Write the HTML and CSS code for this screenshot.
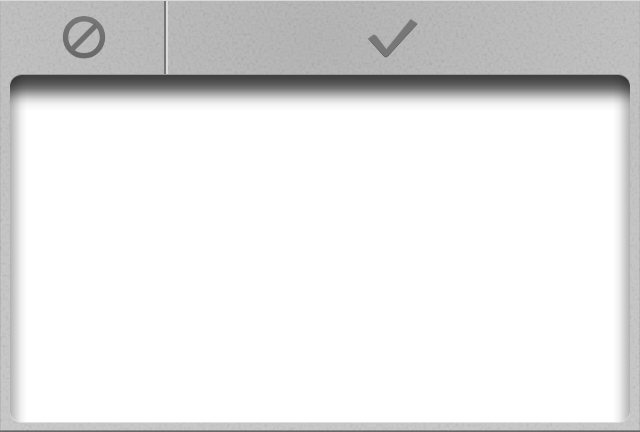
FILE: index.html
```
<!DOCTYPE html>
<html lang="en">
<head>
<meta charset="utf-8">
<title>Panel</title>
<link rel="stylesheet" href="styles.css">
</head>
<body>
<div class="frame">
  <svg class="grain" aria-hidden="true">
    <filter id="grain" x="0" y="0" width="100%" height="100%" color-interpolation-filters="sRGB">
      <feTurbulence type="fractalNoise" baseFrequency="0.34" numOctaves="2" seed="8"/>
      <feColorMatrix values="0.33 0.33 0.33 0 0  0.33 0.33 0.33 0 0  0.33 0.33 0.33 0 0  0 0 0 0 0.12"/>
    </filter>
    <rect width="100%" height="100%" filter="url(#grain)"/>
  </svg>
  <header class="toolbar">
    <button class="action cancel" aria-label="Cancel">
      <svg class="icon" width="44" height="44" viewBox="0 0 44 44">
        <defs>
          <linearGradient id="ink" x1="0" y1="0" x2="0" y2="1"><stop offset="0" stop-color="#777"/><stop offset="1" stop-color="#696969"/></linearGradient>
        </defs>
        <circle cx="22" cy="22.3" r="18.5" fill="none" stroke="url(#ink)" stroke-width="5.4"/>
        <path d="M9.5 34.8 34.5 9.8" stroke="#707070" stroke-width="5.2"/>
      </svg>
    </button>
    <button class="action confirm" aria-label="Confirm">
      <svg class="icon" width="52" height="44" viewBox="0 0 52 44">
        <path d="M1.2 23.6 6.7 19.8 9.5 21 19.4 34.3 43.8 4.3 50.3 8.8 20.8 41.2Q19 43 17 41.2Z" fill="#777"/>
        <path d="M1.2 23.6 17 41.2Q19 43 20.8 41.2L50.3 8.8" fill="none" stroke="#676767" stroke-width="1"/>
        <path d="M2 23.1 6.7 19.8 9.5 21M19.4 34.3 43.8 4.3 49.5 8.2" fill="none" stroke="#858585" stroke-width=".8"/>
      </svg>
    </button>
  </header>
  <main class="well"></main>
</div>
</body>
</html>
```
FILE: styles.css
```
* { box-sizing: border-box; }
body { margin: 0; }
.frame {
  position: relative;
  display: flex;
  flex-direction: column;
  width: 640px;
  height: 432px;
  padding: 0 10px 9px;
  border-top: 1px solid #d8d8d8;
  border-bottom: 1px solid #686868;
  background:
    radial-gradient(ellipse 380px 310px at 50% 10%, rgba(165,165,165,.5), rgba(180,180,180,0)),
    linear-gradient(#c1c1c1, #c8c8c8);
  box-shadow: inset 0 -1px #8c8c8c, inset 1px 0 #b8b8b8, inset -1px 0 #b8b8b8;
}
.grain {
  position: absolute;
  inset: 0;
  width: 100%;
  height: 100%;
  mix-blend-mode: hard-light;
}
.toolbar {
  position: relative;
  display: flex;
  height: 74px;
  margin: 0 -10px;
  padding-bottom: 1px;
}
.action {
  display: flex;
  align-items: center;
  justify-content: center;
  padding: 0 0 2px;
  border: 0;
  background: none;
}
.cancel {
  width: 166px;
  padding-left: 4px;
  border-right: 2px solid #767676;
}
.confirm {
  flex: 1;
  padding-right: 22px;
  border-left: 2px solid #dadada;
}
.icon { display: block; overflow: visible; }
.well {
  position: relative;
  flex: 1;
  border-radius: 12px;
  background:
    linear-gradient(rgba(0,0,0,.75) 0, rgba(0,0,0,.72) 4px, rgba(0,0,0,.65) 9px, rgba(0,0,0,.53) 14px, rgba(0,0,0,.34) 19px, rgba(0,0,0,.16) 24px, rgba(0,0,0,.05) 29px, transparent 36px),
    linear-gradient(90deg, rgba(0,0,0,.3) 0, rgba(0,0,0,.24) 3px, rgba(0,0,0,.15) 7px, rgba(0,0,0,.06) 11px, transparent 17px),
    linear-gradient(270deg, rgba(0,0,0,.3) 0, rgba(0,0,0,.24) 3px, rgba(0,0,0,.15) 7px, rgba(0,0,0,.06) 11px, transparent 17px),
    #fff;
  box-shadow: 0 -1px #9a9a9a, 0 1px #dedede;
}
```
